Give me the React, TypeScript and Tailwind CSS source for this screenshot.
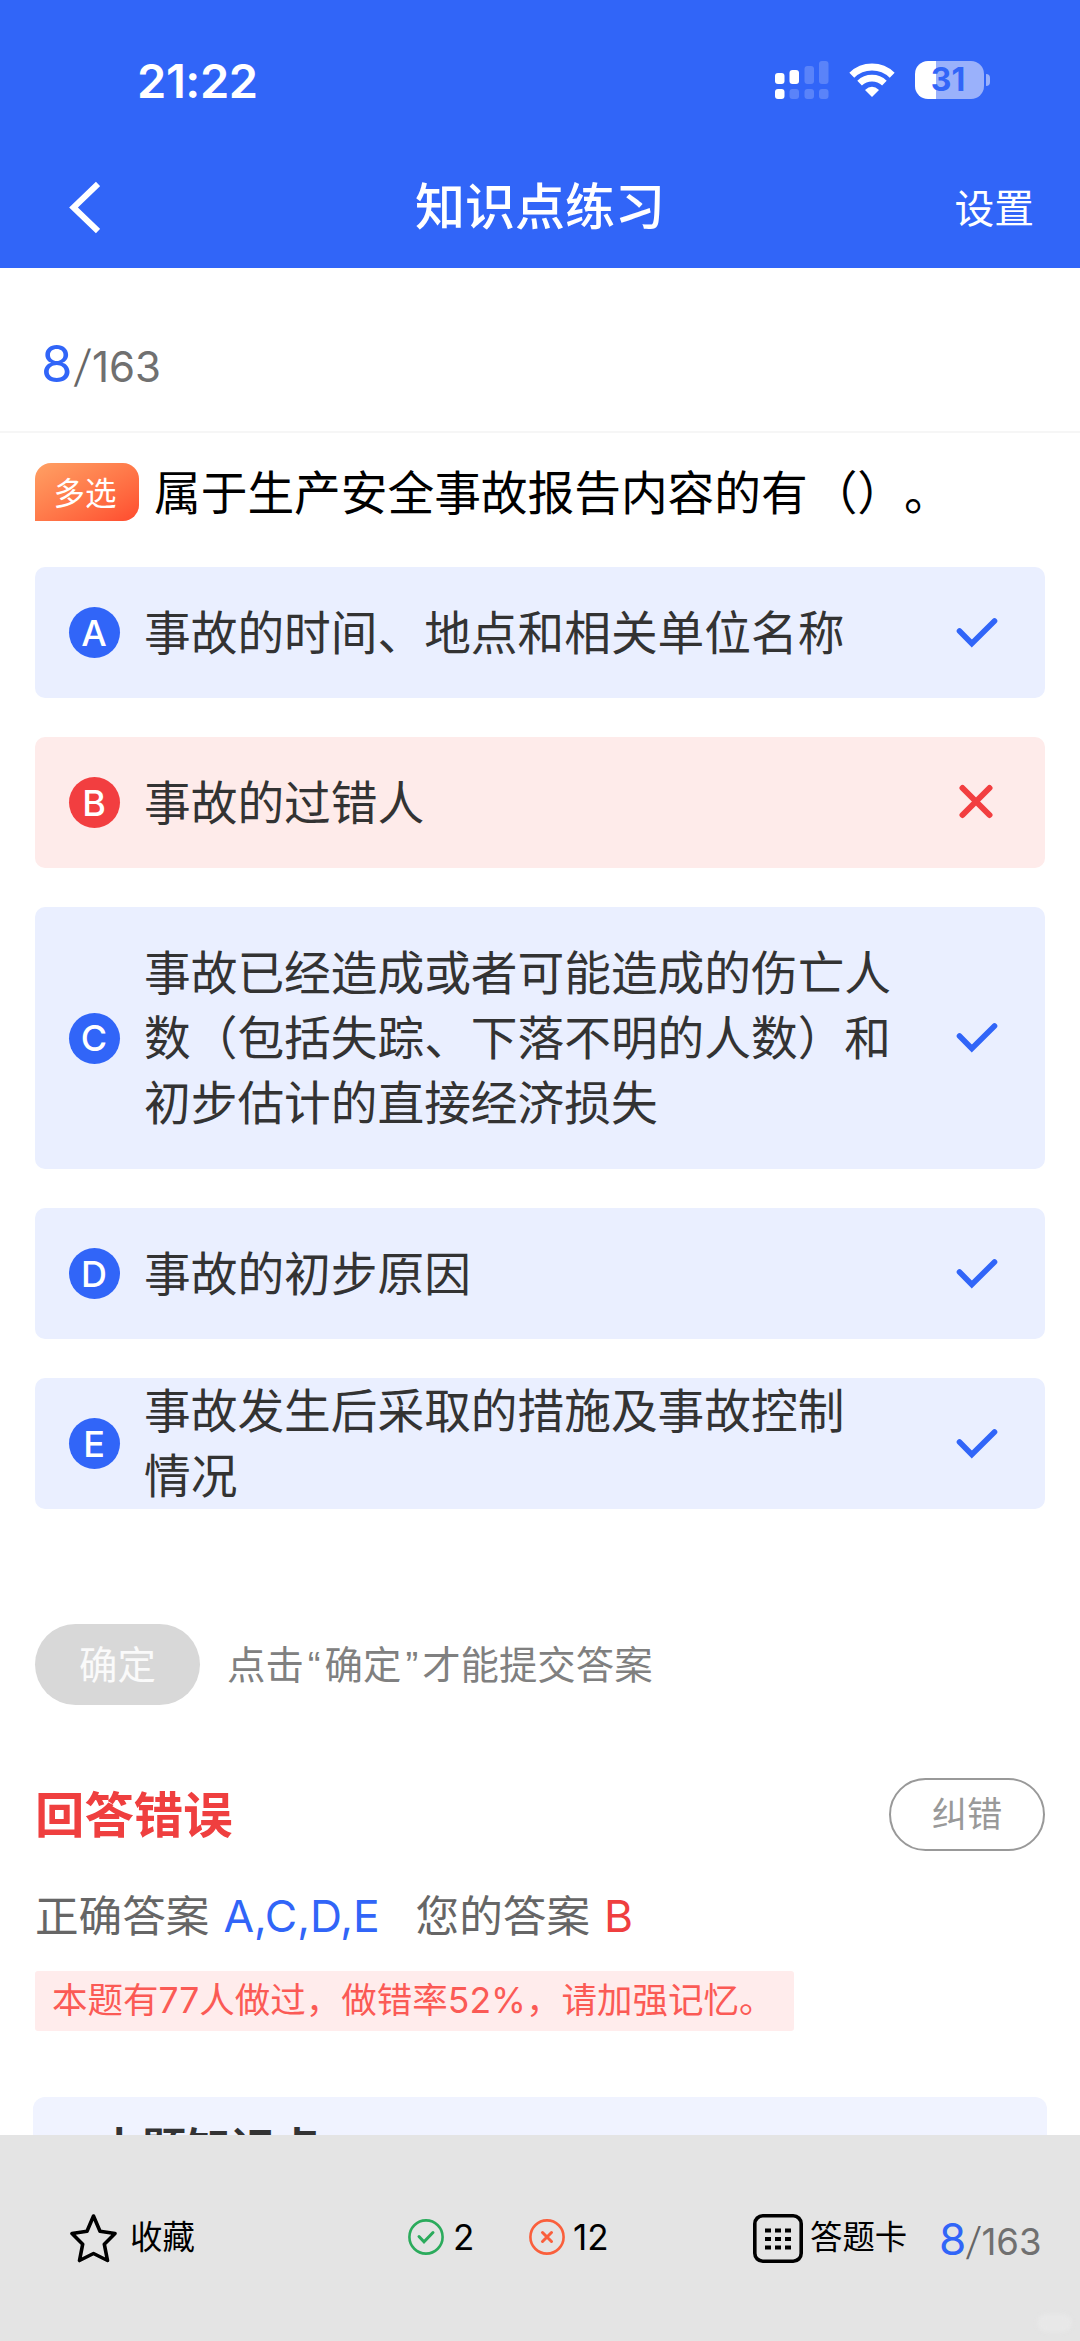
import type { ReactNode } from "react";
import { clsx } from "clsx";

interface Option {
  key: string;
  text: string;
  correct: boolean;
  size: string;
}

const OPTIONS: Option[] = [
  { key: "A", text: "事故的时间、地点和相关单位名称", correct: true, size: "h-[131px]" },
  { key: "B", text: "事故的过错人", correct: false, size: "h-[131px]" },
  {
    key: "C",
    text: "事故已经造成或者可能造成的伤亡人\n数（包括失踪、下落不明的人数）和\n初步估计的直接经济损失",
    correct: true,
    size: "h-[262px]",
  },
  { key: "D", text: "事故的初步原因", correct: true, size: "h-[131px]" },
  { key: "E", text: "事故发生后采取的措施及事故控制\n情况", correct: true, size: "h-[131px]" },
];

function StatusBar() {
  return (
    <div className="flex h-[160px] items-center justify-between pl-[137px] pr-[90px]">
      <span className="text-[47px] font-semibold leading-none tracking-[-0.4px]">21:22</span>
      <div className="flex items-center">
        <svg width="54" height="38" viewBox="0 0 54 38" fill="currentColor">
          <rect x="0" y="12" width="9.5" height="11" rx="3" />
          <rect x="14.5" y="9" width="9.5" height="14" rx="3" />
          <rect x="29.5" y="5" width="9.5" height="18" rx="3" opacity="0.2" />
          <rect x="44" y="0" width="9.5" height="23" rx="3" opacity="0.2" />
          <rect x="0" y="28" width="9.5" height="10" rx="3" />
          <rect x="14.5" y="28" width="9.5" height="10" rx="3" opacity="0.2" />
          <rect x="29.5" y="28" width="9.5" height="10" rx="3" opacity="0.2" />
          <rect x="44" y="28" width="9.5" height="10" rx="3" opacity="0.2" />
        </svg>
        <svg className="ml-[20px]" width="46" height="34" viewBox="0 0 46 34" fill="none">
          <path d="M2.8 12.2A29 29 0 0 1 43.2 12.2" stroke="currentColor" strokeWidth="7" />
          <path d="M10.6 20.2A17.8 17.8 0 0 1 35.4 20.2" stroke="currentColor" strokeWidth="6.6" />
          <path d="M23 34L16 27Q23 20.6 30 27Z" fill="currentColor" />
        </svg>
        <div className="ml-[20px] flex h-[38px] w-[69px] items-center justify-center rounded-[13px] bg-[linear-gradient(90deg,#fff_21px,#9ab1fb_21px)] pr-[3px] text-[32px] font-bold leading-none text-[#3165f8]">
          31
        </div>
        <div className="ml-[2px] h-[12px] w-[4px] rounded-r-full bg-[#9ab1fb]" />
      </div>
    </div>
  );
}

function NavBar() {
  return (
    <div className="grid h-[108px] grid-cols-[1fr_auto_1fr] items-start px-[46px]">
      <svg className="ml-[20px] mt-[21px]" width="34" height="54" viewBox="0 0 34 54" fill="none">
        <path d="M32 3L7.5 26.5L32 50" stroke="currentColor" strokeWidth="6" />
      </svg>
      <h1 className="mt-[12px] text-[50px] font-medium leading-[70px]">知识点练习</h1>
      <span className="mt-[14px] text-right text-[39.8px] leading-[70px]">设置</span>
    </div>
  );
}

function Progress({ small }: { small?: boolean }) {
  return (
    <span className={clsx("flex items-baseline", small ? "text-[36.5px]" : "text-[42px]")}>
      <span className={clsx("text-[#3165f8]", small ? "text-[44px]" : "text-[51px]")}>8</span>
      <span className={clsx("-skew-x-6 font-light text-[#666]", small ? "px-px text-[38px]" : "px-[2px] text-[44px]")}>
        /
      </span>
      <span className="text-[#707070]">163</span>
    </span>
  );
}

function OptionRow({ option }: { option: Option }) {
  return (
    <div
      className={clsx(
        "flex items-center rounded-[10px] pl-[34px] pr-[45px]",
        option.size,
        option.correct ? "bg-[#eaefff]" : "bg-[#feebea]"
      )}
    >
      <span
        className={clsx(
          "flex size-[51px] shrink-0 items-center justify-center rounded-full pr-px text-[36px] font-medium leading-none text-white",
          option.correct ? "bg-[#3165f8]" : "bg-[#f23e40]"
        )}
      >
        {option.key}
      </span>
      <p className="ml-[24px] flex-1 whitespace-pre pt-px text-[46.7px] leading-[65px] text-[#333]">
        {option.text}
      </p>
      {option.correct ? (
        <svg width="44" height="32" viewBox="0 0 44 32" fill="none">
          <path d="M3.5 14L15.8 26.5L38.5 4" stroke="#3165f8" strokeWidth="5.6" strokeLinecap="round" />
        </svg>
      ) : (
        <svg className="mr-[6px]" width="36" height="37" viewBox="0 0 36 37" fill="none">
          <path d="M4.5 4L31.5 31M31.5 4L4.5 31" stroke="#f23e40" strokeWidth="6" strokeLinecap="round" />
        </svg>
      )}
    </div>
  );
}

function Answer({ label, children }: { label: string; children: ReactNode }) {
  return (
    <span className="flex items-baseline gap-[14px]">
      <span>{label}</span>
      {children}
    </span>
  );
}

function BottomBar() {
  return (
    <footer className="relative flex h-[206px] shrink-0 items-start bg-[#e4e4e4] pl-[70px] pt-[72px] text-black">
      <div className="flex h-[62px] w-[338px] items-center">
        <svg width="47" height="50" viewBox="0 0 47 50" fill="none">
          <path
            d="M23.5 3L30 18.2L45 20.5L34.3 31.2L37.5 47.5L23.5 40.5L9.5 47.5L12.7 31.2L2 20.5L17 18.2Z"
            stroke="currentColor"
            strokeWidth="3.6"
            strokeLinejoin="round"
          />
        </svg>
        <span className="ml-[13px] pt-px text-[32.4px]">收藏</span>
      </div>
      <div className="flex h-[60px] w-[121px] items-center">
        <svg width="36" height="36" viewBox="0 0 36 36" fill="none" stroke="#2bab5c">
          <circle cx="18" cy="18" r="16.6" strokeWidth="2.6" />
          <path d="M11 17.5L16 22.8L25 13.5" strokeWidth="3" strokeLinecap="round" />
        </svg>
        <span className="ml-[9px] text-[35px]">2</span>
      </div>
      <div className="flex h-[60px] w-[224px] items-center">
        <svg width="36" height="36" viewBox="0 0 36 36" fill="none" stroke="#fa5f3c">
          <circle cx="18" cy="18" r="16.6" strokeWidth="2.6" />
          <path d="M13.5 13.5L22.5 22.5M22.5 13.5L13.5 22.5" strokeWidth="3" strokeLinecap="round" />
        </svg>
        <span className="ml-[8px] text-[35px]">12</span>
      </div>
      <div className="flex h-[62px] w-[186px] items-center">
        <svg className="shrink-0" width="50" height="49" viewBox="0 0 50 49" fill="none">
          <rect x="1.8" y="1.8" width="46.4" height="45.4" rx="8" stroke="currentColor" strokeWidth="3.6" />
          {[12, 22, 32].map((x) =>
            [14.5, 23, 31.5].map((y) => (
              <rect key={`${x}-${y}`} x={x} y={y} width="6" height="4" fill="currentColor" />
            ))
          )}
        </svg>
        <span className="ml-[7px] whitespace-nowrap pt-px text-[32.4px]">答题卡</span>
      </div>
      <div className="-mt-px">
        <Progress small />
      </div>
      <span className="absolute bottom-[9px] right-[8px] h-[18px] w-[35px] rounded-full bg-[#e8e8e8] blur-[2px]" />
    </footer>
  );
}

export default function App() {
  return (
    <div className="flex h-[2341px] w-[1080px] flex-col overflow-hidden bg-white font-[Inter,'Noto_Sans_CJK_SC',sans-serif]">
      <header className="h-[268px] shrink-0 bg-[#3165f8] text-white">
        <StatusBar />
        <NavBar />
      </header>

      <div className="flex h-[165px] shrink-0 items-center border-b-2 border-[#f6f6f6] pl-[41px] pt-[29px]">
        <Progress />
      </div>

      <main className="flex min-h-0 flex-1 flex-col overflow-hidden px-[35px]">
        <div className="mt-[30px] flex h-[58px] shrink-0 items-center">
          <span className="flex h-[58px] w-[104px] items-center justify-center rounded-[16px] rounded-bl-none bg-linear-to-br from-[#ffa064] to-[#ff4a2e] pr-[4px] pt-[3px] text-[31.5px] text-white">
            多选
          </span>
          <h2 className="ml-[15px] whitespace-nowrap pt-[3px] text-[46.7px] leading-[65px] text-black [text-spacing-trim:space-all]">
            属于生产安全事故报告内容的有<span className="ml-[3px]">（）。</span>
          </h2>
        </div>

        <div className="mt-[46px] flex shrink-0 flex-col gap-[39px]">
          {OPTIONS.map((option) => (
            <OptionRow key={option.key} option={option} />
          ))}
        </div>

        <div className="mt-[115px] flex shrink-0 items-center">
          <button className="h-[81px] w-[165px] rounded-full bg-[#d8d8d8] pt-[2px] text-[38.4px] text-[#fafafa]">确定</button>
          <span className="ml-[27px] pt-[2px] text-[38.4px] text-[#808080]">
            点击<span className="mx-[4px] font-['Liberation_Sans',sans-serif]">“</span>确定
            <span className="mx-[4px] font-['Liberation_Sans',sans-serif]">”</span>才能提交答案
          </span>
        </div>

        <div className="mt-[73px] flex shrink-0 items-center justify-between">
          <h3 className="text-[49.4px] font-bold leading-[72px] text-[#ef3f3f]">回答错误</h3>
          <button className="h-[73px] w-[156px] rounded-full border-[2.5px] border-[#999] pt-px text-[35.3px] text-[#999]">
            纠错
          </button>
        </div>

        <div className="mt-[33px] flex shrink-0 gap-[36px] text-[43.6px] leading-[64px] text-[#666]">
          <Answer label="正确答案">
            <span className="text-[44.4px] text-[#3165f8]">A,C,D,E</span>
          </Answer>
          <Answer label="您的答案">
            <span className="text-[44.4px] text-[#ef3f3f]">B</span>
          </Answer>
        </div>

        <div className="mt-[22px] flex h-[60px] w-[759px] shrink-0 items-center whitespace-nowrap rounded-[3px] bg-[#ffecec] pl-[17px] text-[35.5px] text-[#fb5a55]">
          本题有77人做过，做错率52%，请加强记忆。
        </div>

        <section className="-mx-[2px] mt-[66px] h-[200px] shrink-0 rounded-t-[12px] bg-[#f0f3ff] pl-[64px] pt-[20px]">
          <h3 className="text-[44.5px] font-bold leading-[64px] text-[#333]">本题知识点</h3>
        </section>
      </main>

      <BottomBar />
    </div>
  );
}
